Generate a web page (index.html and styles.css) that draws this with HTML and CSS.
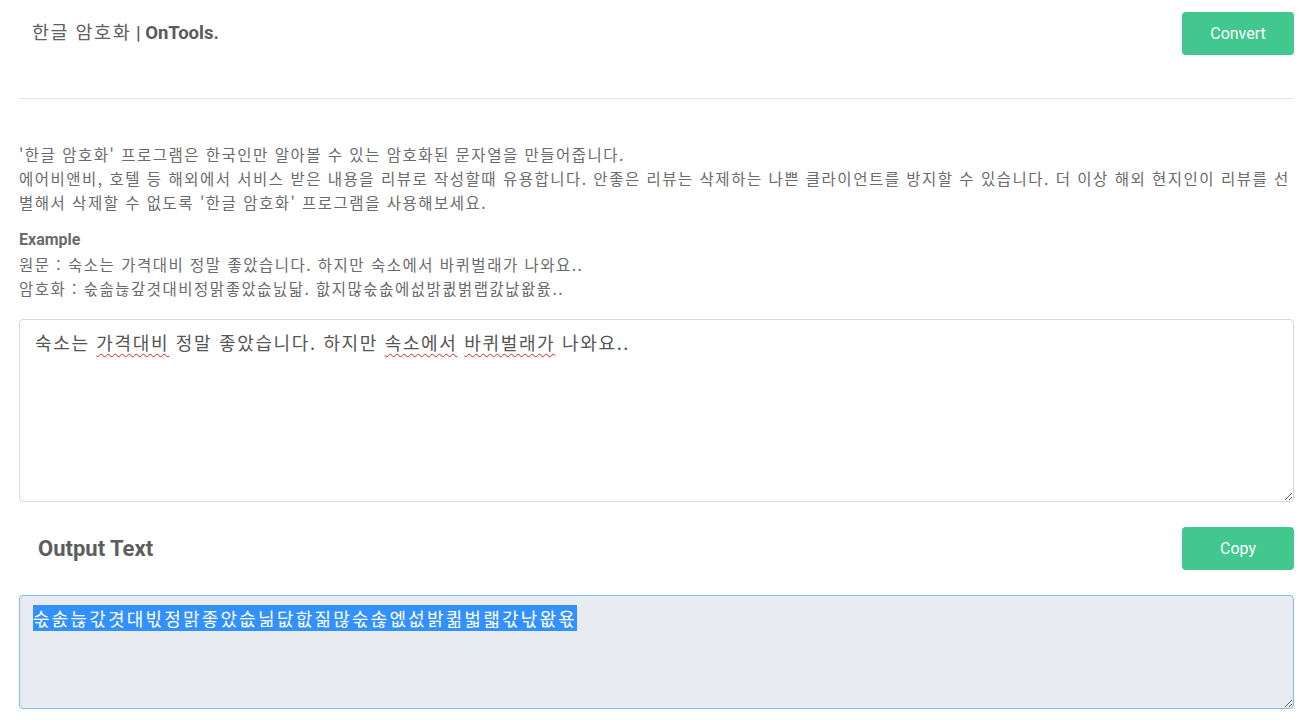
FILE: index.html
```html
<!DOCTYPE html>
<html lang="ko">
<head>
<meta charset="utf-8">
<title>한글 암호화 | OnTools.</title>
<link rel="stylesheet" href="styles.css">
</head>
<body>
<div class="page">
  <header class="header">
    <h1 class="title"><span class="ko">한글 암호화</span> <b>| OnTools.</b></h1>
    <button class="btn">Convert</button>
  </header>
  <p class="desc">'한글 암호화' 프로그램은 한국인만 알아볼 수 있는 암호화된 문자열을 만들어줍니다.<br>에어비앤비, 호텔 등 해외에서 서비스 받은 내용을 리뷰로 작성할때 유용합니다. 안좋은 리뷰는 삭제하는 나쁜 클라이언트를 방지할 수 있습니다. 더 이상 해외 현지인이 리뷰를 선별해서 삭제할 수 없도록 '한글 암호화' 프로그램을 사용해보세요.</p>
  <div class="example">
    <div class="ex-title">Example</div>
    <div>원문 : 숙소는 가격대비 정말 좋았습니다. 하지만 숙소에서 바퀴벌래가 나와요..</div>
    <div>암호화 : 숛솖늖갚겻대비정맑좋았슶닔닯. 핪지많숛솞에섮밝큆벍랩갌낪왒욠..</div>
  </div>
  <div class="input" contenteditable="true" spellcheck="false">숙소는 <span class="typo">가격대비</span> 정말 좋았습니다. 하지만 <span class="typo">속소에서</span> <span class="typo">바퀴벌래가</span> 나와요..</div>
  <div class="out-head">
    <h2 class="out-title">Output Text</h2>
    <button class="btn">Copy</button>
  </div>
  <div class="output"><span class="sel">숛솘늖갃겻대빇정맑좋았슶닒닶핪짊많숛솒엢섮밝퀾벏랣갃낛왒욗</span></div>
</div>
</body>
</html>
```
FILE: styles.css
```css
* { box-sizing: border-box; }
html, body { margin: 0; background: #fff; }
body {
  font-family: Roboto, "Noto Sans CJK KR", sans-serif;
  color: #6b6b6b;
}
.page {
  padding: 12px 13px 0 19px;
}
.header {
  display: flex;
  justify-content: space-between;
  align-items: flex-start;
  height: 87px;
  border-bottom: 1px solid #e6e6e6;
}
.title {
  margin: 0;
  padding-left: 13px;
  font-size: 18.5px;
  font-weight: 400;
  line-height: 43px;
  color: #606060;
}
.title .ko { letter-spacing: 1.6px; }
.title b { font-weight: 700; color: #5a5a5a; }
.btn {
  width: 112px;
  height: 43px;
  border: none;
  border-radius: 4px;
  background: #42c78f;
  color: #fff;
  font-family: Roboto, "Liberation Sans", sans-serif;
  font-size: 16px;
  cursor: pointer;
}
.desc {
  margin: 43px 0 0;
  font-size: 15.5px;
  line-height: 24px;
  font-family: "Noto Sans CJK KR", sans-serif;
  letter-spacing: 1.5px;
}
.example {
  margin-top: 13px;
  font-size: 15.5px;
  line-height: 24px;
  font-family: "Noto Sans CJK KR", sans-serif;
  letter-spacing: 1.5px;
}
.ex-title {
  font-family: Roboto, sans-serif;
  font-weight: 700;
  font-size: 16px;
  letter-spacing: 0;
  line-height: 25px;
}
.input {
  width: 100%;
  height: 183px;
  margin-top: 19px;
  padding: 9px 15px;
  border: 1px solid #d9d9d9;
  border-radius: 4px;
  font-family: "Noto Sans CJK KR", sans-serif;
  font-size: 18px;
  line-height: 27px;
  letter-spacing: 1.65px;
  color: #555;
  resize: both;
  overflow: auto;
  outline: none;
}
.typo {
  text-decoration: underline wavy #e02020;
  text-decoration-thickness: 1px;
  text-underline-offset: 3px;
}
.out-head {
  display: flex;
  justify-content: space-between;
  align-items: center;
  margin-top: 25px;
}
.out-title {
  margin: 0;
  padding-left: 19px;
  font-size: 22px;
  font-weight: 700;
  color: #5e5e5e;
}
.output {
  margin-top: 25px;
  height: 114px;
  padding: 9px 13px;
  border: 1px solid #80bdff;
  border-radius: 4px;
  background: #e8ebef;
  font-family: "Noto Sans CJK KR", sans-serif;
  font-size: 18px;
  line-height: 26px;
  letter-spacing: 2.2px;
  overflow: auto;
  resize: both;
}
.sel {
  background: #3390ff;
  color: #fff;
}
```
